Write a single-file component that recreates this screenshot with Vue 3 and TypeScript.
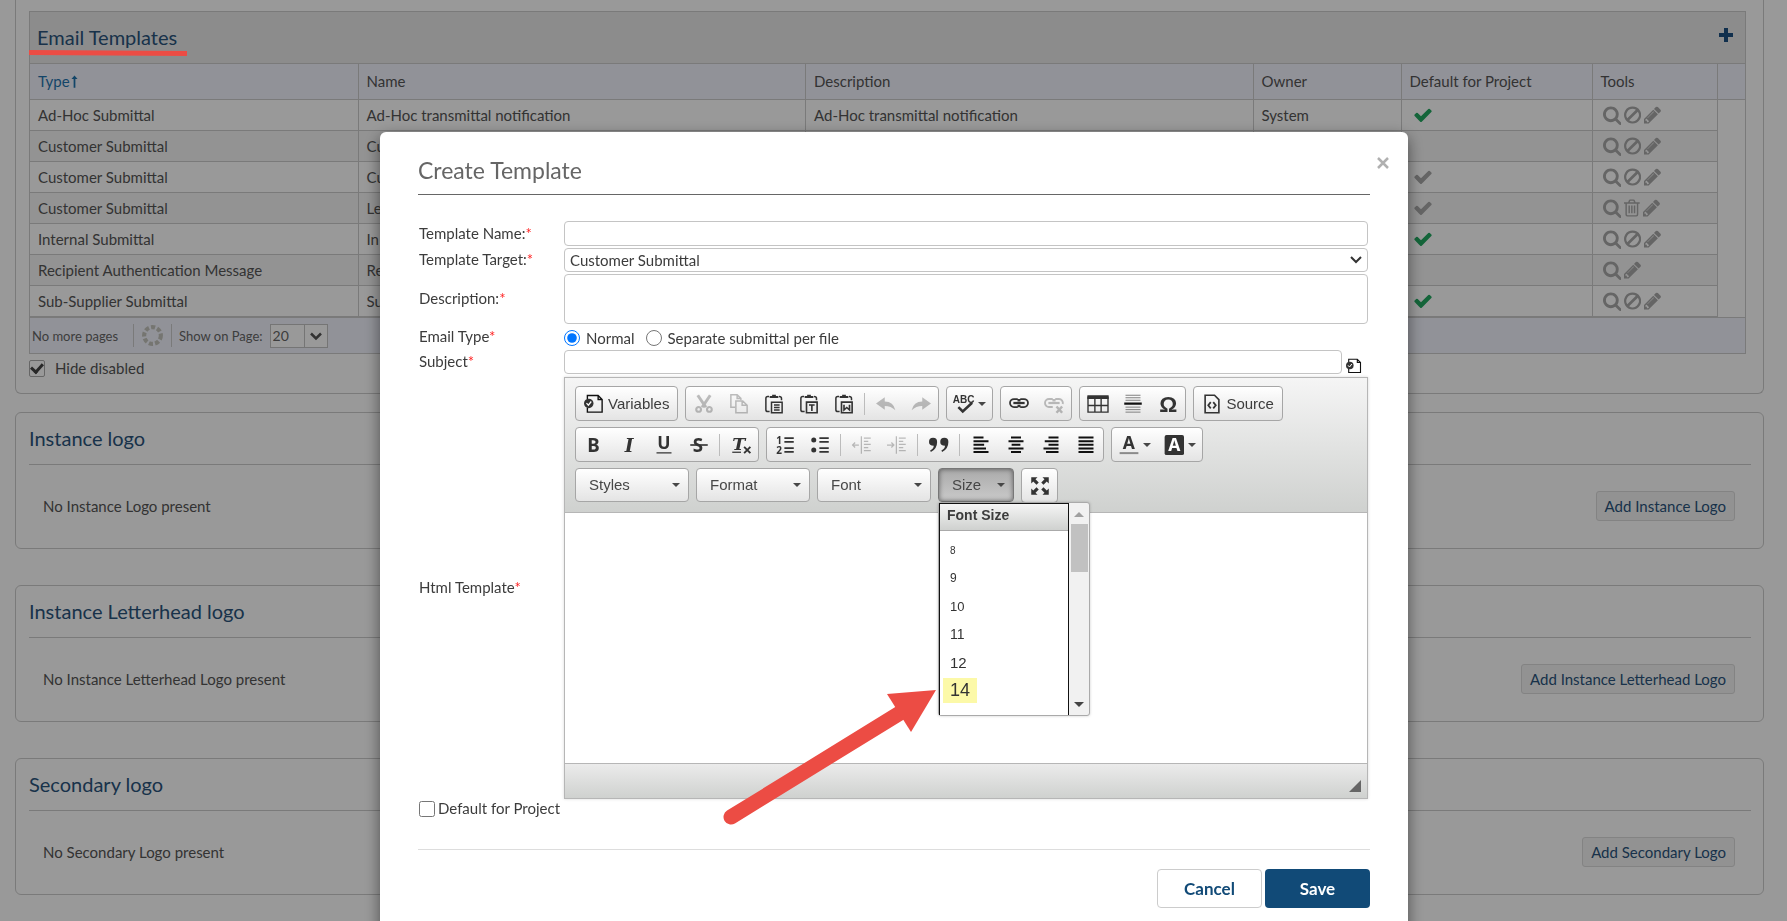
<script setup lang="ts">
import { ref } from 'vue'

interface Shape {
  d?: string
  w?: number
  t?: string
  x?: number
  y?: number
  fs?: number
  c?: string
  fill?: string
}
interface Tool {
  icon: string
  label: string
  off?: boolean
  caret?: boolean
  text?: string
}
type Item = Tool | 'sep'
interface Row {
  type: string
  name: string
  desc: string
  owner: string
  def: '' | 'on' | 'off'
  tools: string[]
}

const rows: Row[] = [
  { type: 'Ad-Hoc Submittal', name: 'Ad-Hoc transmittal notification', desc: 'Ad-Hoc transmittal notification', owner: 'System', def: 'on', tools: ['search', 'ban', 'pencil'] },
  { type: 'Customer Submittal', name: 'Cu', desc: '', owner: '', def: '', tools: ['search', 'ban', 'pencil'] },
  { type: 'Customer Submittal', name: 'Cu', desc: '', owner: '', def: 'off', tools: ['search', 'ban', 'pencil'] },
  { type: 'Customer Submittal', name: 'Le', desc: '', owner: '', def: 'off', tools: ['search', 'trash', 'pencil'] },
  { type: 'Internal Submittal', name: 'In', desc: '', owner: '', def: 'on', tools: ['search', 'ban', 'pencil'] },
  { type: 'Recipient Authentication Message', name: 'Re', desc: '', owner: '', def: '', tools: ['search', 'pencil'] },
  { type: 'Sub-Supplier Submittal', name: 'Su', desc: '', owner: '', def: 'on', tools: ['search', 'ban', 'pencil'] },
]

const logos = [
  { title: 'Instance logo', note: 'No Instance Logo present', action: 'Add Instance Logo' },
  { title: 'Instance Letterhead logo', note: 'No Instance Letterhead Logo present', action: 'Add Instance Letterhead Logo' },
  { title: 'Secondary logo', note: 'No Secondary Logo present', action: 'Add Secondary Logo' },
]

const gridIcons: Record<string, { box: string; d: string; rule?: 'evenodd' }> = {
  search: {
    box: '0 0 1664 1792',
    d: 'M1152 832q0-185-131.5-316.5t-316.5-131.5-316.5 131.5-131.5 316.5 131.5 316.5 316.5 131.5 316.5-131.5 131.5-316.5zm512 832q0 52-38 90t-90 38q-54 0-90-38l-343-342q-179 124-399 124-143 0-273.5-55.5t-225-150-150-225-55.5-273.5 55.5-273.5 150-225 225-150 273.5-55.5 273.5 55.5 225 150 150 225 55.5 273.5q0 220-124 399l343 343q37 37 37 90z',
  },
  ban: {
    box: '0 0 1536 1792',
    d: 'M768 128a768 768 0 1 0 0.1 0zM768 335a561 561 0 0 1 300 87L294 1196A561 561 0 0 1 768 335zM1242 596A561 561 0 0 1 460 1365z',
    rule: 'evenodd',
  },
  pencil: {
    box: '128 0 1536 1792',
    d: 'M491 1536l91-91-235-235-91 91v107h128v128h107zm523-928q0-22-22-22-10 0-17 7l-542 542q-7 7-7 17 0 22 22 22 10 0 17-7l542-542q7-7 7-17zm-54-192l416 416-832 832h-416v-416zm683 96q0 53-37 90l-166 166-416-416 166-165q36-38 90-38 53 0 91 38l235 234q37 39 37 91z',
  },
  trash: {
    box: '0 0 1408 1792',
    d: 'M0 384h370l60-160q30-96 120-96h308q90 0 120 96l60 160h370v128h-128v960q0 192-160 192H288q-160 0-160-192V512H0zM512 384h384l-40-112q-6-16-24-16H576q-18 0-24 16zM256 512v950q0 74 48 74h800q48 0 48-74V512zM400 672h128v704H400zM640 672h128v704H640zM880 672h128v704H880z',
    rule: 'evenodd',
  },
}

const clipboard: Shape[] = [
  { d: 'M4.500 14H3q-1.500 0-1.500-1.500v-9Q1.500 2 3 2h1M12 2q2 0 2 1.500V5', w: 1.2 },
  { d: 'M4.500 3.200V1.500h2V.5h3v1h2v1.700z' },
]
const icons: Record<string, Shape[]> = {
  cut: [{ d: 'M3 1l6.500 9.600M13 1l-6.500 9.600', w: 2.4 }, { d: 'M3.700 14.200a1.900 1.900 0 1 0 0-3.800 1.900 1.900 0 0 0 0 3.800zM12.300 14.200a1.900 1.900 0 1 0 0-3.800 1.900 1.900 0 0 0 0 3.800z', w: 1.7 }],
  copy: [{ d: 'M5 10.500H1.500v-10h5l3 3V5M6.500.5v3h3', w: 1.2 }, { d: 'M5.500 5.500h5.500l3.500 3.500v6h-9zM10.500 5.500V9h4', w: 1.2 }],
  paste: [...clipboard, { d: 'M6 6.500h8.500v8.500H6zM8 8.800h4.500M8 10.800h4.500M8 12.800h4.500', w: 1.2 }],
  pasteText: [...clipboard, { d: 'M6 6.500h8.500v8.500H6zM8 8.800h4.500M10.300 8.800v4.700', w: 1.3 }],
  pasteWord: [...clipboard, { d: 'M6 6.500h8.500v8.500H6zM8 8.500v4.300l2.200-2 2.200 2V8.500', w: 1.3 }],
  undo: [{ d: 'M0 7.500L7 2.500V6q7 0 8.500 7Q12 9.500 7 9.500V12.500z' }],
  redo: [{ d: 'M16 7.500L9 2.500V6Q2 6 .5 13 4 9.500 9 9.500v3z' }],
  spell: [{ t: 'ABC', x: -1, y: 7.500, fs: 8 }, { d: 'M3.500 10.500l3.500 3.500 7.500-7', w: 2 }],
  link: [{ d: 'M7 4H4a3.200 3.200 0 0 0 0 6.400h3M9 4h3a3.200 3.200 0 0 1 0 6.400H9M7.500 4v2M8.500 4v2M7.500 8.500v2M8.500 8.500v2', w: 1.4 }, { d: 'M3.500 7.200h9', w: 1.8 }],
  unlink: [{ d: 'M7 4H4a3.200 3.200 0 0 0 0 6.400h3M9 4h3a3.200 3.200 0 0 1 3 4M7.500 4v2M8.500 4v2', w: 1.5 }, { d: 'M3.500 7.200h9', w: 1.8 }, { d: 'M10 10l4.500 5M14.500 10L10 15', w: 2 }],
  table: [{ d: 'M-.5 1h17v3h-17z' }, { d: 'M0 2v12.500h16V2M0 9.200h16M5.500 4v10.500M10.500 4v10.500', w: 1.1 }],
  hr: [{ d: 'M2 1h12M2 3h12M2 5h12M2 10.500h12M2 12.500h12M2 14.500h12', w: 0.8, c: '#808080' }, { d: 'M1 7.700h14', w: 1.8, c: '#111' }],
  omega: [{ t: 'Ω', x: 1, y: 14.500, fs: 18 }],
  source: [{ d: 'M2.500 1h7.500l3.500 3.500V15h-11z', w: 1.3 }, { d: 'M7 6.500L5 9l2 2.500M9 6.500L11 9l-2 2.500', w: 1.4 }],
  bold: [{ t: 'B', x: 2.500, y: 13.500, fs: 15 }],
  italic: [{ t: 'I', x: 4.500, y: 13.500, fs: 15, c: 'it' }],
  underline: [{ t: 'U', x: 2.500, y: 11.500, fs: 14 }, { d: 'M2 14.300h12', w: 1 }],
  strike: [{ t: 'S', x: 3, y: 13.500, fs: 15 }, { d: 'M1 8h14', w: 1.3 }],
  clear: [{ t: 'T', x: 1, y: 12, fs: 14, c: 'it' }, { d: 'M1 13.800h7', w: 1 }, { d: 'M10.500 9.500l5 5M15.500 9.500l-5 5', w: 1.5 }],
  ol: [{ t: '1', x: 1, y: 7, fs: 8 }, { t: '2', x: 1, y: 15, fs: 8 }, { d: 'M7.500 2.500H15M7.500 5.500H15M7.500 10.500H15M7.500 13.500H15', w: 1.3 }],
  ul: [{ d: 'M5 4a2 2 0 1 1-4 0 2 2 0 0 1 4 0zM5 12a2 2 0 1 1-4 0 2 2 0 0 1 4 0z' }, { d: 'M7.500 2.500H15M7.500 5.500H15M7.500 10.500H15M7.500 13.500H15', w: 1.3 }],
  outdent: [{ d: 'M7.500 1v14M9.500 2.500H15M9.500 5H13M9.500 7.500H15M9.500 10H13M9.500 12.500H15M0 8h5.500M2.500 6l-2 2 2 2', w: 1 }],
  indent: [{ d: 'M7.500 1v14M9.500 2.500H15M9.500 5H13M9.500 7.500H15M9.500 10H13M9.500 12.500H15M0 8h5M3.500 6l2 2-2 2', w: 1 }],
  quote: [{ d: 'M0 5.500a3.200 3.200 0 1 1 6.500 0Q6.500 11 1.500 13.500l-.6-1.200Q3.700 10.800 3.800 8.500 0 8.500 0 5.500zM9 5.500a3.200 3.200 0 1 1 6.500 0q0 5.500-5 8l-.6-1.200q2.800-1.500 2.900-3.800Q9 8.500 9 5.500z' }],
  left: [{ d: 'M2 2h8M2 4.900h12M2 7.800h8.500M2 10.700h10M2 13.600h12', w: 1.6, c: '#111' }],
  center: [{ d: 'M4 2h8M2 4.900h12M4.500 7.800h7M2 10.700h12M4 13.600h8', w: 1.6, c: '#111' }],
  right: [{ d: 'M6 2h8M3 4.900h11M6 7.800h8M2 10.700h12M4 13.600h10', w: 1.6, c: '#111' }],
  justify: [{ d: 'M2 2h12M2 4.900h12M2 7.800h12M2 10.700h12M2 13.600h12', w: 1.6, c: '#111' }],
  color: [{ t: 'A', x: 3, y: 11.500, fs: 14 }, { d: 'M.5 14.500h15', w: 1.6, c: '#8a8a8a' }],
  bgcolor: [{ d: 'M2 0h12.500q1.500 0 1.500 1.500v13q0 1.500-1.500 1.500H2Q.5 16 .5 14.500v-13Q.5 0 2 0z' }, { t: 'A', x: 3.400, y: 13, fs: 14, fill: '#fff' }],
  max: [{ d: 'M1 1h5L4.400 2.600 7 5.200 5.200 7 2.600 4.400 1 6zM15 1v5l-1.600-1.600L10.800 7 9 5.200l2.600-2.600L10 1zM1 15v-5l1.600 1.600L5.200 9 7 10.800l-2.600 2.600L6 15zM15 15h-5l1.600-1.600L9 10.800 10.800 9l2.600 2.600L15 10z' }],
  variables: [{ d: 'M2.700 4V1.200h8.600l3.200 3.200v10.100H2.700V11M11.300 1.200v3.200h3.200', w: 1.1, c: '#111' }, { d: 'M7.600 7.500a3.800 3.800 0 1 1-7.600 0 3.800 3.800 0 0 1 7.600 0z' }, { d: 'M2 7.300L3.500 9l2.300-3', w: 1, c: '#fff' }],
}

const t = (icon: string, label: string, extra: Partial<Tool> = {}): Tool => ({ icon, label, ...extra })
const bars: Item[][][] = [
  [
    [t('variables', 'Variables', { text: 'Variables' })],
    [t('cut', 'Cut', { off: true }), t('copy', 'Copy', { off: true }), t('paste', 'Paste'), t('pasteText', 'Paste as plain text'), t('pasteWord', 'Paste from Word'), 'sep', t('undo', 'Undo', { off: true }), t('redo', 'Redo', { off: true })],
    [t('spell', 'Spell check', { caret: true })],
    [t('link', 'Link'), t('unlink', 'Unlink', { off: true })],
    [t('table', 'Table'), t('hr', 'Horizontal line'), t('omega', 'Special character')],
    [t('source', 'Source', { text: 'Source' })],
  ],
  [
    [t('bold', 'Bold'), t('italic', 'Italic'), t('underline', 'Underline'), t('strike', 'Strikethrough'), 'sep', t('clear', 'Remove format')],
    [t('ol', 'Numbered list'), t('ul', 'Bulleted list'), 'sep', t('outdent', 'Decrease indent', { off: true }), t('indent', 'Increase indent', { off: true }), 'sep', t('quote', 'Block quote'), 'sep', t('left', 'Align left'), t('center', 'Center'), t('right', 'Align right'), t('justify', 'Justify')],
    [t('color', 'Text color', { caret: true }), t('bgcolor', 'Background color', { caret: true })],
  ],
]
const combos = ['Styles', 'Format', 'Font']
const sizes = [
  { n: 8, px: 10 },
  { n: 9, px: 12 },
  { n: 10, px: 13 },
  { n: 11, px: 14 },
  { n: 12, px: 15 },
  { n: 14, px: 18 },
]

const hideDisabled = ref(true)
const emailType = ref('normal')
const sizeOpen = ref(true)
</script>

<template>
  <main class="page">
    <section class="panel first">
      <div class="grid">
        <header class="grid-head">
          <h2>Email Templates</h2>
          <button class="plus" aria-label="Add template">
            <svg viewBox="0 0 14 14"><path d="M5 0h4v5h5v4H9v5H5V9H0V5h5z" /></svg>
          </button>
        </header>
        <table>
          <colgroup>
            <col class="c-type" /><col /><col /><col class="c-owner" /><col class="c-def" /><col class="c-tools" /><col class="c-end" />
          </colgroup>
          <thead>
            <tr>
              <th class="sorted">Type<svg class="up" viewBox="0 0 8 14"><path d="M4 0l3.500 4H5v10H3V4H.5z" /></svg></th>
              <th>Name</th>
              <th>Description</th>
              <th>Owner</th>
              <th>Default for Project</th>
              <th>Tools</th>
              <th></th>
            </tr>
          </thead>
          <tbody>
            <tr v-for="(r, i) in rows" :key="i">
              <td>{{ r.type }}</td>
              <td>{{ r.name }}</td>
              <td>{{ r.desc }}</td>
              <td>{{ r.owner }}</td>
              <td>
                <svg v-if="r.def" class="tick" :class="r.def" viewBox="0 0 1792 1792"><path d="M1671 566q0 40-28 68l-724 724-136 136q-28 28-68 28t-68-28l-136-136-362-362q-28-28-28-68t28-68l136-136q28-28 68-28t68 28l294 295 656-657q28-28 68-28t68 28l136 136q28 28 28 68z" /></svg>
              </td>
              <td>
                <div class="tools">
                  <button v-for="k in r.tools" :key="k" :aria-label="k">
                    <svg :viewBox="gridIcons[k].box"><path :d="gridIcons[k].d" :fill-rule="gridIcons[k].rule" /></svg>
                  </button>
                </div>
              </td>
              <td class="end"></td>
            </tr>
          </tbody>
        </table>
        <footer class="pager">
          <span class="more">No more pages</span>
          <svg class="spin" viewBox="0 0 22 22"><circle cx="11" cy="11" r="8" /></svg>
          <label for="per-page">Show on Page:</label>
          <span class="per">
            <select id="per-page"><option>20</option></select>
            <svg viewBox="0 0 12 8"><path d="M1 1.500l5 5 5-5" /></svg>
          </span>
        </footer>
      </div>
      <label class="hide"><input v-model="hideDisabled" type="checkbox" />Hide disabled</label>
    </section>

    <section v-for="l in logos" :key="l.title" class="panel logo">
      <h2>{{ l.title }}</h2>
      <div class="logo-row">
        <span>{{ l.note }}</span>
        <button>{{ l.action }}</button>
      </div>
    </section>
  </main>

  <div class="overlay">
    <form class="modal" role="dialog" aria-labelledby="dlg-title" @submit.prevent>
      <header class="modal-head">
        <h1 id="dlg-title">Create Template</h1>
        <button type="button" class="close" aria-label="Close">
          <svg viewBox="0 0 12 12"><path d="M1 1l10 10M11 1L1 11" /></svg>
        </button>
      </header>

      <div class="fields">
        <label for="f-name">Template Name:<i>*</i></label>
        <input id="f-name" class="box name" type="text" />
        <label for="f-target">Template Target:<i>*</i></label>
        <div class="pick">
          <select id="f-target" class="box"><option>Customer Submittal</option></select>
          <svg viewBox="0 0 12 8"><path d="M1 1l5 5 5-5" /></svg>
        </div>
        <label for="f-desc">Description:<i>*</i></label>
        <textarea id="f-desc" class="box desc"></textarea>
        <span id="l-type" class="lbl">Email Type<i>*</i></span>
        <div class="radios" role="radiogroup" aria-labelledby="l-type">
          <label><input v-model="emailType" type="radio" name="etype" value="normal" />Normal</label>
          <label><input v-model="emailType" type="radio" name="etype" value="separate" />Separate submittal per file</label>
        </div>
        <label for="f-subject">Subject<i>*</i></label>
        <div class="subject">
          <input id="f-subject" class="box" type="text" />
          <button type="button" aria-label="Insert variable">
            <svg class="ico" viewBox="0 0 16 16">
              <path v-for="(s, i) in icons.variables" :key="i" :d="s.d" :class="{ line: s.w }" :stroke="s.w ? s.c || '#333' : undefined" :stroke-width="s.w" />
            </svg>
          </button>
        </div>
        <label for="f-html">Html Template<i>*</i></label>
        <div class="editor">
          <div class="toolbar">
            <div v-for="(bar, bi) in bars" :key="bi" class="bar">
              <div v-for="(g, gi) in bar" :key="gi" class="group">
                <template v-for="(it, ii) in g" :key="ii">
                  <span v-if="it === 'sep'" class="sep"></span>
                  <button v-else type="button" :aria-label="it.label" :class="{ off: it.off, wide: it.text, drop: it.caret }">
                    <svg class="ico" viewBox="0 0 16 16">
                      <template v-for="(s, si) in icons[it.icon]" :key="si">
                        <text v-if="s.t" :x="s.x" :y="s.y" :font-size="s.fs" :fill="s.fill" :class="[s.c, { plain: it.icon === 'omega' || it.icon === 'spell' }]">{{ s.t }}</text>
                        <path v-else :d="s.d" :class="{ line: s.w }" :stroke="s.w ? s.c || '#333' : undefined" :stroke-width="s.w" />
                      </template>
                    </svg>
                    <span v-if="it.text">{{ it.text }}</span>
                    <b v-if="it.caret" class="caret"></b>
                  </button>
                </template>
              </div>
            </div>
            <div class="bar">
              <button v-for="c in combos" :key="c" type="button" class="combo">{{ c }}<b class="caret"></b></button>
              <div class="size">
                <button type="button" class="combo open" @click="sizeOpen = !sizeOpen">Size<b class="caret"></b></button>
                <div v-if="sizeOpen" class="menu">
                  <div class="list">
                    <h3>Font Size</h3>
                    <ul>
                      <li v-for="s in sizes" :key="s.n"><a href="#" :class="{ hot: s.n === 14 }" :style="{ fontSize: s.px + 'px' }">{{ s.n }}</a></li>
                    </ul>
                  </div>
                  <div class="track">
                    <b class="tri up-tri"></b>
                    <span class="thumb"></span>
                    <b class="tri down-tri"></b>
                  </div>
                </div>
              </div>
              <div class="group">
                <button type="button" aria-label="Maximize"><svg class="ico" viewBox="0 0 16 16"><path :d="icons.max[0].d" /></svg></button>
              </div>
            </div>
          </div>
          <textarea id="f-html" class="area"></textarea>
          <div class="status"><svg viewBox="0 0 12 12"><path d="M12 0v12H0z" /></svg></div>
        </div>
      </div>
      <label class="default"><input type="checkbox" />Default for Project</label>
      <footer class="actions">
        <button type="button" class="cancel">Cancel</button>
        <button type="submit" class="save">Save</button>
      </footer>
    </form>
  </div>

  <svg class="marks" aria-hidden="true">
    <path class="under" d="M29 52.500L187 53.500" />
    <path class="shaft" d="M731 817L900 713" />
    <path class="tip" d="M936 690L887 694L911 732Z" />
  </svg>
</template>

<style>
html,
body {
  overflow: hidden;
  background: #fff;
}
</style>

<style scoped>
* {
  box-sizing: border-box;
}
.page,
.overlay {
  font-family: Lato, 'Liberation Sans', sans-serif;
  font-size: 15px;
  line-height: 20px;
  color: #555;
}
button,
input,
select,
textarea {
  font: inherit;
  color: inherit;
  margin: 0;
}
button {
  padding: 0;
  border: 0;
  background: none;
}
h1,
h2,
h3 {
  margin: 0;
  font-weight: 400;
}
.page {
  height: 100vh;
  overflow: hidden;
  padding: 0 23px 0 15px;
}
.panel {
  border: 1px solid #ccc;
  border-radius: 6px;
}
.first {
  border-top: 0;
  border-radius: 0 0 6px 6px;
  padding: 11px 17px 15px 13px;
  margin-bottom: 18px;
}
.grid {
  border: 1px solid #ccc;
}
.grid-head {
  display: flex;
  justify-content: space-between;
  height: 51px;
  padding: 12px 12px 0 7px;
  background: #e9e9e9;
}
h2 {
  font-size: 20px;
  line-height: 26px;
  color: #2a547c;
}
.plus {
  align-self: flex-start;
  padding-top: 4px;
}
.plus svg {
  display: block;
  width: 14px;
  height: 14px;
  fill: #1b4f80;
}
table {
  width: 100%;
  table-layout: fixed;
  border-collapse: collapse;
}
.c-type {
  width: 328px;
}
.c-owner {
  width: 148px;
}
.c-def {
  width: 191px;
}
.c-tools {
  width: 125px;
}
.c-end {
  width: 28px;
}
th,
td {
  padding: 0 8px;
  text-align: left;
  font-weight: 400;
  white-space: nowrap;
  overflow: hidden;
  border: 1px solid #ccc;
  border-left: 0;
}
th:last-child,
td:last-child {
  border-right: 0;
}
th {
  height: 36px;
  padding-bottom: 1px;
  background: #f2f4fe;
}
td {
  height: 31px;
}
tbody tr:nth-child(even) td {
  background: #f5f5f5;
}
tbody tr td.end {
  background: #fff;
  border-top: 0;
  border-bottom: 0;
}
.sorted {
  color: #1f73ad;
}
.up {
  width: 7px;
  height: 13px;
  fill: #1f73ad;
  margin-left: 1px;
  vertical-align: -1px;
}
.tick {
  display: block;
  width: 20px;
  height: 20px;
  margin-left: 3px;
}
.tick.on {
  fill: #22a861;
}
.tick.off {
  fill: #a8a8a8;
}
.tools {
  display: flex;
  gap: 3px;
  padding-left: 2px;
}
.tools svg {
  display: block;
  height: 20px;
  fill: #a8a8a8;
}
.pager {
  display: flex;
  align-items: center;
  height: 36px;
  border-top: 1px solid #ccc;
  background: #f2f4fe;
  padding-left: 2px;
  font-size: 13px;
  color: #666;
}
.more {
  padding-right: 15px;
}
.spin {
  width: 39px;
  height: 23px;
  border: solid #ccc;
  border-width: 0 1px;
  fill: none;
}
.spin circle {
  stroke: #c4c4bc;
  stroke-width: 4;
  stroke-dasharray: 4 2;
}
.pager label {
  padding: 0 7px;
}
.per {
  display: flex;
  width: 58px;
  height: 24px;
  border: 1px solid #c4c4c4;
  background: #fff;
}
.per select {
  appearance: none;
  flex: 1;
  min-width: 0;
  border: 0;
  border-right: 1px solid #c4c4c4;
  background: none;
  padding: 0 2px;
  font-size: 14px;
}
.per svg {
  width: 12px;
  margin: 0 5px;
  fill: none;
  stroke: #555;
  stroke-width: 2.5px;
}
.hide {
  display: flex;
  align-items: center;
  gap: 10px;
  margin-top: 4px;
}
.hide input {
  appearance: none;
  width: 16px;
  height: 17px;
  border: 1px solid #aaa;
  border-radius: 2px;
  display: grid;
  place-items: center;
}
.hide input:checked::before {
  content: '';
  width: 5px;
  height: 9px;
  margin-bottom: 3px;
  border: solid #444;
  border-width: 0 3px 3px 0;
  transform: rotate(42deg);
}
.logo {
  height: 137px;
  margin-bottom: 36px;
  padding: 12px 12px 0 13px;
}
.logo h2 {
  padding-bottom: 13px;
  border-bottom: 1px solid #ccc;
}
.logo-row {
  display: flex;
  align-items: center;
  justify-content: space-between;
  padding: 26px 16px 0 14px;
}
.logo-row button {
  height: 30px;
  padding: 0 8px;
  border: 1px solid #dadada;
  border-radius: 3px;
  background: #f3f3f3;
  color: #2a547c;
}
.overlay {
  position: fixed;
  inset: 0;
  overflow: hidden;
  background: rgba(0, 0, 0, 0.4);
  padding: 132px 379px 0 380px;
}
.modal {
  background: #fff;
  border-radius: 6px;
  box-shadow: 0 5px 15px rgba(0, 0, 0, 0.5);
  padding: 0 38px 38px;
  color: #3c3c3c;
}
.modal-head {
  display: flex;
  justify-content: space-between;
  height: 63px;
  border-bottom: 1px solid #666;
}
h1 {
  font-size: 23px;
  line-height: 30px;
  padding-top: 23px;
  color: #666;
}
.close {
  align-self: flex-start;
  margin: 25px -19px 0 0;
}
.close svg {
  display: block;
  width: 12px;
  height: 12px;
  stroke: #b0b0b0;
  stroke-width: 2.5px;
}
.fields {
  display: grid;
  grid-template-columns: 145px minmax(0, 1fr);
  row-gap: 2px;
  align-items: center;
  padding: 26px 2px 0 1px;
}
.fields > label,
.fields > .lbl {
  padding-bottom: 2px;
}
i {
  font-style: normal;
  color: #f22;
}
.box {
  width: 100%;
  border: 1px solid #c4c4c4;
  border-radius: 4px;
  background: #fff;
  padding: 0 5px;
}
.name {
  height: 25px;
}
.pick {
  display: grid;
  align-items: center;
}
.pick > * {
  grid-area: 1 / 1;
}
.pick select {
  appearance: none;
  height: 24px;
}
.pick svg {
  justify-self: end;
  width: 12px;
  margin-right: 6px;
  fill: none;
  stroke: #333;
  stroke-width: 2px;
  pointer-events: none;
}
.desc {
  display: block;
  height: 50px;
  resize: none;
}
.radios {
  display: flex;
  gap: 11px;
  height: 22px;
  align-items: center;
  padding-top: 2px;
}
.radios label {
  display: flex;
  align-items: center;
  gap: 6px;
}
.radios input {
  width: 16px;
  height: 16px;
}
.subject {
  display: flex;
  align-items: flex-end;
  gap: 4px;
  padding-right: 6px;
}
.subject .box {
  height: 24px;
  flex: 1;
}
.subject .ico {
  width: 16px;
  height: 16px;
}
.ico {
  display: block;
  width: 20px;
  height: 20px;
  overflow: visible;
  fill: #333;
  flex: none;
}
.ico .line {
  fill: none;
}
.ico text {
  font-family: 'Noto Sans', sans-serif;
  font-weight: 700;
}
.ico text.it {
  font-style: italic;
  font-family: 'DejaVu Serif', serif;
}
.ico text.plain {
  font-family: 'Liberation Sans', sans-serif;
}
.editor {
  border: 1px solid #b6b6b6;
  box-shadow: 0 0 3px rgba(0, 0, 0, 0.15);
  margin-top: 1px;
  font-family: 'Liberation Sans', Arial, sans-serif;
}
.toolbar {
  display: flex;
  flex-direction: column;
  gap: 6px;
  height: 135px;
  padding: 8px 9px 0 10px;
  border-bottom: 1px solid #b6b6b6;
  background: linear-gradient(#f5f5f5, #cfd1cf);
}
.bar {
  display: flex;
  gap: 7px;
  height: 35px;
}
.group {
  display: flex;
  align-items: center;
  height: 35px;
  border: 1px solid #a6a6a6;
  border-radius: 4px;
  background: linear-gradient(#fff, #e4e4e4);
}
.group button {
  display: flex;
  align-items: center;
  justify-content: center;
  gap: 4px;
  width: 35px;
  height: 33px;
}
.group button.wide {
  width: auto;
  padding: 0 8px;
}
.group button.drop {
  width: 45px;
}
.off .ico {
  opacity: 0.3;
}
.sep {
  width: 1px;
  height: 22px;
  margin: 0 3px;
  background: #bcbcbc;
}
.caret {
  width: 0;
  height: 0;
  border: solid transparent;
  border-width: 4px 4px 0;
  border-top-color: #474747;
}
.combo {
  display: flex;
  align-items: center;
  justify-content: space-between;
  width: 114px;
  height: 34px;
  padding: 0 8px 0 13px;
  border: 1px solid #a6a6a6;
  border-radius: 4px;
  background: linear-gradient(#fff, #e4e4e4);
  color: #474747;
}
.size {
  position: relative;
}
.combo.open {
  width: 76px;
  border-color: #777;
  background: linear-gradient(#aaa, #cacaca);
  box-shadow: 0 0 5px rgba(0, 0, 0, 0.5) inset;
}
.menu {
  position: absolute;
  top: 34px;
  left: 0;
  z-index: 1;
  display: flex;
  width: 152px;
  height: 214px;
  background: #f1f1f1;
  border: 1px solid #aaa;
  border-radius: 3px;
  box-shadow: 0 0 3px rgba(0, 0, 0, 0.2);
}
.list {
  width: 130px;
  background: #fff;
  border: 1px solid #111;
  border-bottom: 0;
  overflow: hidden;
}
h3 {
  height: 27px;
  padding-left: 7px;
  font-size: 14px;
  line-height: 23px;
  font-weight: 700;
  border-bottom: 1px solid #aaa;
  background: linear-gradient(#f5f5f5, #cfd1cf);
}
ul {
  list-style: none;
  margin: 0;
  padding: 5px 3px 0;
}
li {
  height: 28px;
  display: flex;
  align-items: center;
}
li a {
  padding: 0 7px;
  line-height: 25px;
  color: #333;
  text-decoration: none;
}
li a.hot {
  background: #fcf9a8;
}
.track {
  flex: 1;
  display: flex;
  flex-direction: column;
  align-items: center;
}
.tri {
  width: 0;
  height: 0;
  border: solid transparent;
}
.up-tri {
  border-width: 0 5px 5px;
  border-bottom-color: #a0a0a0;
  margin: 9px 0 7px;
}
.down-tri {
  border-width: 5px 5px 0;
  border-top-color: #444;
  margin: auto 0 8px;
}
.thumb {
  width: 17px;
  height: 48px;
  background: #c1c1c1;
}
.area {
  display: block;
  width: 100%;
  height: 250px;
  border: 0;
  resize: none;
}
.status {
  display: flex;
  justify-content: flex-end;
  align-items: flex-end;
  height: 35px;
  padding: 6px;
  border-top: 1px solid #b6b6b6;
  background: linear-gradient(#ebebeb, #cfd1cf);
}
.status svg {
  width: 12px;
  height: 12px;
  fill: #666;
}
.default {
  display: flex;
  align-items: flex-start;
  gap: 3px;
  line-height: 18px;
  padding-left: 1px;
}
.default input {
  width: 16px;
  height: 16px;
  margin-top: 2px;
}
.actions {
  display: flex;
  justify-content: flex-end;
  gap: 3px;
  margin-top: 32px;
  padding-top: 19px;
  border-top: 1px solid #ddd;
}
.actions button {
  width: 105px;
  height: 39px;
  border-radius: 4px;
  font-size: 17px;
  font-weight: 700;
}
.cancel {
  border: 1px solid #ccc;
  background: #fff;
  color: #114a77;
}
.save {
  background: #114a77;
  color: #fff;
}
.marks {
  position: fixed;
  inset: 0;
  width: 100%;
  height: 100%;
  pointer-events: none;
  fill: none;
  stroke: #ec4c44;
}
.under {
  stroke-width: 5px;
}
.shaft {
  stroke-width: 15px;
  stroke-linecap: round;
}
.tip {
  fill: #ec4c44;
  stroke: none;
}
</style>
